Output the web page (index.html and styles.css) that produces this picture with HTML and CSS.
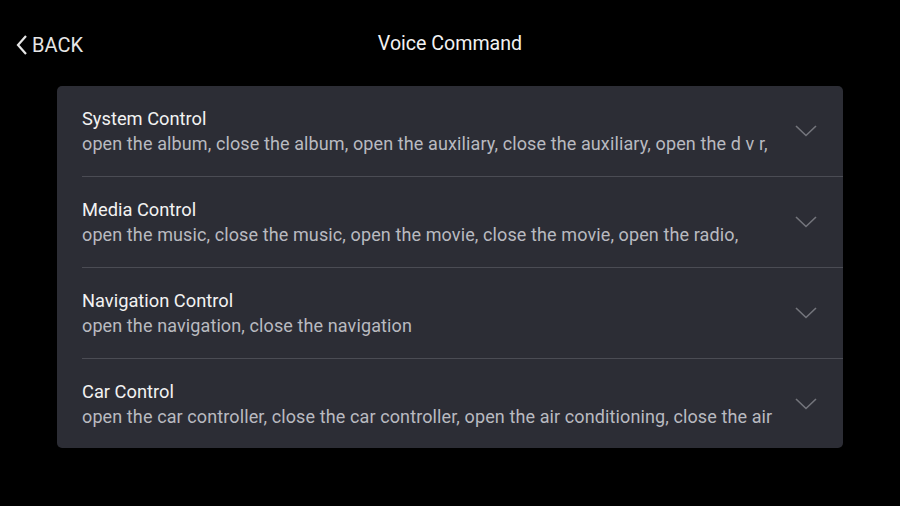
FILE: index.html
```html
<!DOCTYPE html>
<html>
<head>
<meta charset="utf-8">
<link rel="stylesheet" href="styles.css">
</head>
<body>
<header class="topbar">
  <div class="back">
    <svg class="back-icon" width="14" height="22" viewBox="0 0 14 22"><path d="M11 2 L3 11 L11 20" fill="none" stroke="#e6e6e6" stroke-width="2.2"/></svg>
    <span>BACK</span>
  </div>
  <h1 class="title">Voice Command</h1>
</header>
<main class="card">
  <div class="row">
    <div class="text">
      <div class="name">System Control</div>
      <div class="desc">open the album, close the album, open the auxiliary, close the auxiliary, open the d v r,</div>
    </div>
    <svg class="chev" width="24" height="12" viewBox="0 0 24 12"><path d="M2 1 L12 10.5 L22 1" fill="none" stroke="#74757c" stroke-width="1.6"/></svg>
  </div>
  <div class="row">
    <div class="text">
      <div class="name">Media Control</div>
      <div class="desc">open the music, close the music, open the movie, close the movie, open the radio,</div>
    </div>
    <svg class="chev" width="24" height="12" viewBox="0 0 24 12"><path d="M2 1 L12 10.5 L22 1" fill="none" stroke="#74757c" stroke-width="1.6"/></svg>
  </div>
  <div class="row">
    <div class="text">
      <div class="name">Navigation Control</div>
      <div class="desc">open the navigation, close the navigation</div>
    </div>
    <svg class="chev" width="24" height="12" viewBox="0 0 24 12"><path d="M2 1 L12 10.5 L22 1" fill="none" stroke="#74757c" stroke-width="1.6"/></svg>
  </div>
  <div class="row">
    <div class="text">
      <div class="name">Car Control</div>
      <div class="desc">open the car controller, close the car controller, open the air conditioning, close the air</div>
    </div>
    <svg class="chev" width="24" height="12" viewBox="0 0 24 12"><path d="M2 1 L12 10.5 L22 1" fill="none" stroke="#74757c" stroke-width="1.6"/></svg>
  </div>
</main>
</body>
</html>
```
FILE: styles.css
```css
html, body {
  margin: 0;
  padding: 0;
  background: #000;
  width: 900px;
  height: 506px;
  overflow: hidden;
  font-family: Roboto, "Liberation Sans", sans-serif;
}
.topbar {
  position: relative;
  height: 86px;
  display: flex;
  align-items: center;
  justify-content: center;
}
.back {
  position: absolute;
  left: 15px;
  top: 33px;
  display: flex;
  align-items: center;
  gap: 3px;
  color: #e6e6e6;
  font-size: 20px;
}
.back-icon { display: block; }
.title {
  margin: 0;
  font-weight: 400;
  font-size: 19.6px;
  color: #f2f2f2;
  height: 86px;
  line-height: 88px;
}
.card {
  margin: 0 57px;
  background: #2c2d35;
  border-radius: 5px;
  height: 362px;
}
.row {
  height: 90px;
  margin-left: 25px;
  display: flex;
  align-items: center;
  border-bottom: 1px solid #4b4c54;
}
.row:last-child { border-bottom: none; }
.text {
  flex: 1;
  min-width: 0;
}
.name {
  font-size: 18.3px;
  line-height: 25px;
  color: #f2f2f2;
}
.desc {
  font-size: 18px;
  letter-spacing: 0.11px;
  line-height: 25px;
  color: #b9bac0;
  white-space: nowrap;
}
.chev {
  margin-right: 25px;
  flex: none;
}
```
